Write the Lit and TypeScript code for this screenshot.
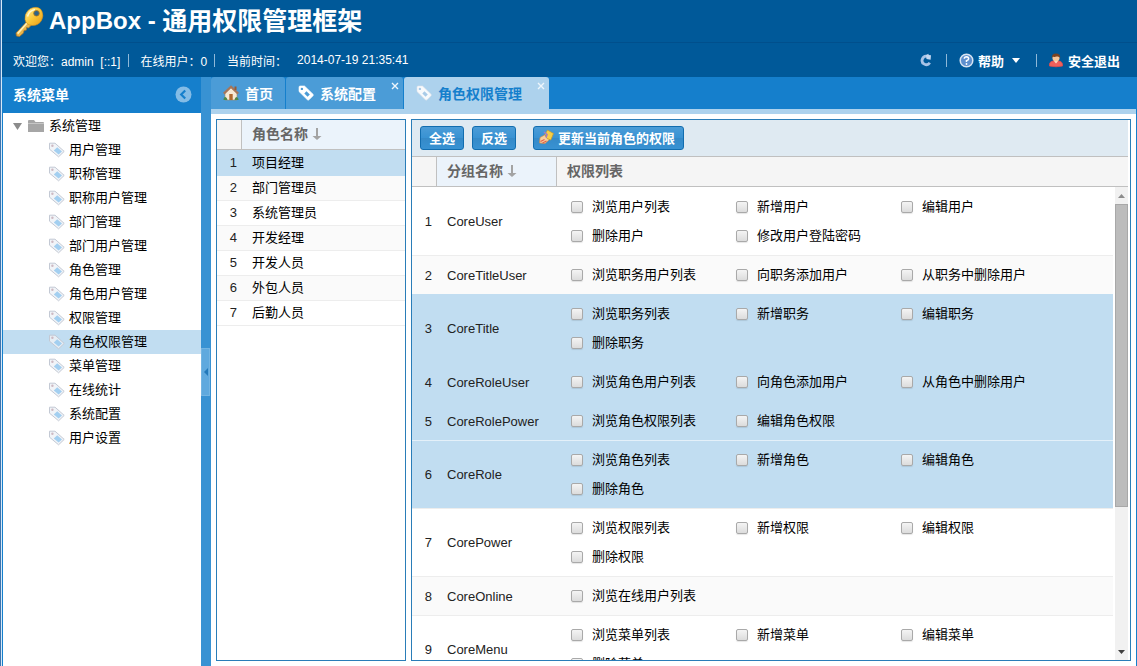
import { LitElement, html, css } from "lit";
import { customElement, state } from "lit/decorators.js";
import { classMap } from "lit/directives/class-map.js";

const MENU = [
  "用户管理", "职称管理", "职称用户管理", "部门管理", "部门用户管理", "角色管理", "角色用户管理",
  "权限管理", "角色权限管理", "菜单管理", "在线统计", "系统配置", "用户设置",
];

const ROLES = ["项目经理", "部门管理员", "系统管理员", "开发经理", "开发人员", "外包人员", "后勤人员"];

interface Group {
  name: string;
  powers: string[];
  selected?: boolean;
  divided?: boolean;
}

const GROUPS: Group[] = [
  { name: "CoreUser", powers: ["浏览用户列表", "新增用户", "编辑用户", "删除用户", "修改用户登陆密码"] },
  { name: "CoreTitleUser", powers: ["浏览职务用户列表", "向职务添加用户", "从职务中删除用户"] },
  { name: "CoreTitle", powers: ["浏览职务列表", "新增职务", "编辑职务", "删除职务"], selected: true },
  { name: "CoreRoleUser", powers: ["浏览角色用户列表", "向角色添加用户", "从角色中删除用户"], selected: true },
  { name: "CoreRolePower", powers: ["浏览角色权限列表", "编辑角色权限"], selected: true },
  { name: "CoreRole", powers: ["浏览角色列表", "新增角色", "编辑角色", "删除角色"], selected: true, divided: true },
  { name: "CorePower", powers: ["浏览权限列表", "新增权限", "编辑权限", "删除权限"] },
  { name: "CoreOnline", powers: ["浏览在线用户列表"] },
  { name: "CoreMenu", powers: ["浏览菜单列表", "新增菜单", "编辑菜单", "删除菜单"] },
];

const tagIcon = (edge: string, fill: string, core: string) => html`
  <svg width="16" height="16" viewBox="0 0 16 16" aria-hidden="true">
    <path d="M1 2.2 Q1 1 2.2 1 L6.5 1 L15 9.2 Q15.8 10 15 10.8 L11 14.8 Q10.2 15.5 9.4 14.8 L1 6.5 Z"
      fill=${fill} stroke=${edge} stroke-width="0.6" />
    <path d="M8.5 6.2 L11.8 9.4 L9.6 11.7 L6.3 8.4 Z" fill=${core} />
    <circle cx="3.9" cy="3.9" r="1.2" fill=${core} />
  </svg>`;

const sortArrow = html`
  <svg width="10" height="12" viewBox="0 0 10 12" aria-hidden="true">
    <path d="M4 0 H6 V8 H9.5 L5 12 L0.5 8 H4 Z" fill="#a3a3a3" />
  </svg>`;

const base = css`
  * { box-sizing: border-box; }
  button, input { font: inherit; margin: 0; }
  button { border: 0; padding: 0; background: none; color: inherit; cursor: pointer; }
  a { color: inherit; text-decoration: none; }
  svg { display: block; flex: none; }
`;

@customElement("app-header")
class AppHeader extends LitElement {
  static styles = [base, css`
    :host { display: block; background: #005999; color: #fff; }
    .title {
      display: flex; align-items: center; height: 42px; padding: 0 4px 0 10px;
      margin: 0; font-size: 24px; font-weight: bold; line-height: 40px; white-space: pre;
    }
    .title svg { margin-right: 5px; }
    .cn { font-size: 25px; }
    .title .collapse { margin-left: auto; align-self: flex-start; padding-top: 5px; }
    .title .collapse svg { margin: 0; }
    .bar {
      display: flex; align-items: center; height: 35px; padding: 0 17px 0 11px;
      border-top: 1px solid #004f8c; font-size: 12px;
    }
    .sep { width: 1px; height: 13px; background: #8fb8d8; }
    .user { padding-right: 8px; white-space: pre; }
    .item { padding: 0 7px 0 11px; }
    .now { padding-left: 12px; }
    .time { padding-left: 10px; }
    .actions { display: flex; align-items: center; margin-left: auto; font-size: 13px; font-weight: bold; }
    .action { display: flex; align-items: center; gap: 4px; }
    .refresh { padding-right: 13px; }
    .help { padding: 0 16px 0 12px; }
    .help .caret { margin-left: 4px; }
    .exit { padding-left: 11px; }
  `];

  render() {
    return html`
      <h1 class="title">
        <svg width="32" height="32" viewBox="0 0 32 32" aria-hidden="true">
          <defs>
            <linearGradient id="gold" x1="0" y1="0" x2="1" y2="1">
              <stop offset="0" stop-color="#fff0a0" /><stop offset="0.5" stop-color="#fbc93a" />
              <stop offset="1" stop-color="#e99a14" />
            </linearGradient>
          </defs>
          <path d="M15.5 16 L19.5 20 L16.5 23 L14.5 22.5 L14.5 25 L12 25.5 L11.5 28 L7.5 31.5 L4.5 31 L4 28 Z"
            fill="#e8b54a" stroke="#a8762c" stroke-width="0.8" />
          <path d="M15 18 L5.6 28.6" stroke="#fff1b8" stroke-width="1.6" />
          <path d="M21.5 2.5 Q28 1.5 30 6.5 Q32 11 29.5 15.5 Q26.5 20.5 20.5 20.5 Q14 20 13 14.5 Q12.5 9 16 5.5 Q18.5 3 21.5 2.5 Z"
            fill="url(#gold)" stroke="#d08c18" stroke-width="0.6" />
          <path d="M15.5 11.5 Q17 5.5 23 4.5" stroke="#fff8cf" stroke-width="1.6" fill="none" />
          <circle cx="24.5" cy="8.3" r="2.8" fill="#2e6489" stroke="#b87b16" stroke-width="0.8" />
        </svg><span>AppBox - </span><span class="cn">通用权限管理框架</span>
        <button class="collapse" aria-label="收起">
          <svg width="9" height="6" viewBox="0 0 9 6"><path d="M4.5 0 L8.5 5.5 H0.5 Z" fill="#b4b4b4" /></svg>
        </button>
      </h1>
      <div class="bar">
        <span class="user">欢迎您：admin  [::1]</span><i class="sep"></i>
        <span class="item">在线用户：0</span><i class="sep"></i>
        <span class="now">当前时间：</span><span class="time">2014-07-19 21:35:41</span>
        <div class="actions">
          <button class="action refresh" aria-label="刷新">
            <svg width="14" height="14" viewBox="0 0 14 14">
              <path d="M10.8 9.8 A4.2 4.2 0 1 1 8.5 3.4" fill="none" stroke="#a9c3e6" stroke-width="2.8" />
              <path d="M7 2 L9.5 0.8 L9.6 2 L12 2.2 L11.6 6.8 L7.5 6 Z" fill="#c3d6f0" />
            </svg>
          </button>
          <i class="sep"></i>
          <button class="action help">
            <svg width="15" height="15" viewBox="0 0 15 15">
              <circle cx="7.5" cy="7.5" r="6.3" fill="#5d8fce" stroke="#d8e4f2" stroke-width="1.5" />
              <path d="M5.3 5.8 Q5.4 3.8 7.5 3.8 Q9.7 3.9 9.6 5.8 Q9.4 7 7.5 7.6 V9" fill="none" stroke="#fff" stroke-width="1.5" />
              <circle cx="7.5" cy="11" r="0.9" fill="#fff" />
            </svg>
            帮助
            <svg class="caret" width="8" height="5" viewBox="0 0 8 5"><path d="M0 0 H8 L4 5 Z" fill="#fff" /></svg>
          </button>
          <i class="sep"></i>
          <a class="action exit" href="#exit">
            <svg width="16" height="16" viewBox="0 0 16 16">
              <path d="M1.5 14 Q0.8 9.8 5 9 L11 9 Q15 9.8 14.5 14 Q8 15.5 1.5 14 Z" fill="#f0605c" stroke="#e04c4c" stroke-width="0.8" />
              <path d="M5.8 8.8 L8 11.5 L10.2 8.8 Z" fill="#fde3d3" />
              <circle cx="8" cy="5.8" r="3.6" fill="#f8c79a" />
              <path d="M3.8 6 Q3.4 1.6 8 1.4 Q12.6 1.6 12.2 6 Q10.8 3.8 8.5 4.6 Q6 5.4 5 4.4 Z" fill="#7a4322" />
            </svg>
            安全退出
          </a>
        </div>
      </div>`;
  }
}

@customElement("app-sidebar")
class AppSidebar extends LitElement {
  @state() current = "角色权限管理";

  static styles = [base, css`
    :host { display: flex; flex-direction: column; background: #fff; border-left: 1px solid #157fcc; }
    .head {
      display: flex; align-items: center; justify-content: space-between; height: 36px;
      padding: 0 9px 2px 10px; background: #157fcc; color: #fff; font-size: 14px; font-weight: bold;
    }
    .head h2 { margin: 0; font-size: inherit; }
    .tree, .tree ul { list-style: none; margin: 0; padding: 0; font-size: 13px; }
    .tree { padding-top: 1px; }
    .node { display: flex; align-items: center; height: 24px; width: 100%; line-height: 24px; }
    .folder { padding-left: 10px; gap: 5px; }
    .folder .mark { margin-right: 1px; }
    .leaf { padding-left: 45px; gap: 2px; color: #000; }
    .on { background: #c1ddf1; }
  `];

  render() {
    return html`
      <div class="head">
        <h2>系统菜单</h2>
        <button aria-label="折叠">
          <svg width="17" height="17" viewBox="0 0 17 17">
            <circle cx="8.5" cy="8.5" r="8" fill="#84bce6" />
            <path d="M10.2 4.5 L6.2 8.5 L10.2 12.5" fill="none" stroke="#157fcc" stroke-width="2.2" />
          </svg>
        </button>
      </div>
      <ul class="tree">
        <li>
          <div class="node folder">
            <svg class="mark" width="9" height="7" viewBox="0 0 9 7"><path d="M0 0 H9 L4.5 7 Z" fill="#8c8c8c" /></svg>
            <svg width="16" height="12" viewBox="0 0 16 12">
              <path d="M0 1 Q0 0 1 0 H6 L7.5 2 H15 Q16 2 16 3 V12 H0 Z" fill="#a6a6a6" />
              <path d="M0 3.5 H16" stroke="#c6c6c6" />
            </svg>
            <span>系统管理</span>
          </div>
          <ul>
            ${MENU.map((m) => html`
              <li>
                <a class=${classMap({ node: true, leaf: true, on: m === this.current })} href="#menu"
                  @click=${() => (this.current = m)}>
                  <svg width="19" height="16" viewBox="0 0 19 16" aria-hidden="true">
                    <path d="M1.5 1.2 H7 L16.2 9.4 L10.6 14.8 L1.5 7.2 Z" fill=${m === this.current ? "#e6eef5" : "#f1f4f8"} stroke="#c3c9d4" />
                    <path d="M9.2 5.2 L14 9.4 L10.6 12.5 L5.8 8.4 Z" fill="#a3cff0" />
                    <circle cx="4.4" cy="3.8" r="1.2" fill="#cdb9c2" />
                  </svg>
                  <span>${m}</span>
                </a>
              </li>`)}
          </ul>
        </li>
      </ul>`;
  }
}

@customElement("app-tabs")
class AppTabs extends LitElement {
  static styles = [base, css`
    :host { display: block; background: #157fcc; }
    .tabs { display: flex; gap: 1px; height: 32px; }
    .strip { height: 5px; margin-right: 1px; background: #add2ed; }
    .tab {
      position: relative; display: flex; align-items: center;
      padding: 0 12px; background: #4b9cd7; color: #fff;
      font-size: 14px; font-weight: bold; border-radius: 3px 3px 0 0;
    }
    .label { display: flex; align-items: center; gap: 6px; }
    .closable { padding-right: 27px; }
    .on { background: #add2ed; color: #157fcc; }
    .close { position: absolute; top: 5px; right: 4px; }
  `];

  private close() {
    return html`
      <button class="close" aria-label="关闭">
        <svg width="8" height="8" viewBox="0 0 8 8"><path d="M1 1 L7 7 M7 1 L1 7" stroke="#eef6fc" stroke-width="1.4" /></svg>
      </button>`;
  }

  render() {
    return html`
      <div class="tabs">
        <div class="tab">
          <button class="label">
            <svg width="16" height="16" viewBox="0 0 16 16">
              <path d="M2 8 L8 2.5 L14 8 V15 H2 Z" fill="#f6ead6" stroke="#a58a66" stroke-width="0.6" />
              <path d="M0.8 8.6 L8 1.8 L15.2 8.6" fill="none" stroke="#a5765a" stroke-width="2.2" />
              <rect x="11.5" y="1.5" width="2" height="3.5" fill="#9a5a34" />
              <rect x="6.3" y="9" width="3.4" height="6" fill="#b06a30" />
              <path d="M0.5 15 Q0.5 12 2.5 12 Q4 12.5 4.5 15 Z M11.5 15 Q12 12 13.6 12 Q15.6 12.4 15.6 15 Z" fill="#4e8a4c" />
            </svg>首页
          </button>
        </div>
        <div class="tab closable">
          <button class="label">${tagIcon("#ffffff", "#ffffff", "#4b9cd7")}系统配置</button>${this.close()}
        </div>
        <div class="tab closable on">
          <button class="label">${tagIcon("#dfe3ea", "#f8fafc", "#a9cbe8")}角色权限管理</button>${this.close()}
        </div>
      </div>
      <div class="strip"></div>`;
  }
}

const gridStyles = css`
  table { border-collapse: separate; border-spacing: 0; table-layout: fixed; width: 100%; font-size: 13px; }
  th {
    height: 30px; padding: 0 10px 2px; text-align: left; background: #f5f5f5; color: #666;
    font-size: 14px; font-weight: bold; line-height: 20px; border-bottom: 1px solid #c0c0c0;
  }
  th + th { border-left: 1px solid #c0c0c0; }
  .sorted { background: #ebf3fb; }
  .sort { display: flex; align-items: center; gap: 4px; }
  .num { width: 24px; }
  td { padding: 0 10px; }
  td.num { padding: 0 4px 0 0; text-align: right; color: #222; }
`;

@customElement("role-grid")
class RoleGrid extends LitElement {
  @state() current = 0;

  static styles = [base, gridStyles, css`
    :host { display: block; background: #fff; border: 1px solid #2a7db8; overflow: hidden; }
    td { height: 25px; border-bottom: 1px solid #ededed; line-height: 20px; }
    td + td { padding-left: 11px; }
    tbody tr:first-child td { height: 26px; padding-top: 1px; }
    tr:nth-child(even) td { background: #fafafa; }
    tr.on td { background: #c1ddf1; border-color: #c1ddf1; }
  `];

  render() {
    return html`
      <table>
        <colgroup><col class="num" /><col /></colgroup>
        <thead><tr><th></th><th class="sorted"><span class="sort">角色名称${sortArrow}</span></th></tr></thead>
        <tbody>
          ${ROLES.map((r, i) => html`
            <tr class=${classMap({ on: i === this.current })} @click=${() => (this.current = i)}>
              <td class="num">${i + 1}</td><td>${r}</td>
            </tr>`)}
        </tbody>
      </table>`;
  }
}

@customElement("power-grid")
class PowerGrid extends LitElement {
  static styles = [base, gridStyles, css`
    :host {
      display: flex; flex-direction: column; background: #fff; padding-right: 2px;
      border: 1px solid #2a7db8; overflow: hidden;
    }
    .toolbar {
      display: flex; flex: none; align-items: center; gap: 8px; height: 37px; padding: 0 8px;
      background: #dfeaf2; border-bottom: 1px solid #c0c0c0;
    }
    .btn {
      display: flex; align-items: center; gap: 3px; height: 24px; padding: 0 8px 2px;
      background: linear-gradient(#4b9cd7, #3892d3 50%, #358ac8 51%, #3892d3);
      border: 1px solid #126daf; border-radius: 3px; color: #fff; font-size: 13px; font-weight: bold;
    }
    .update { margin-left: 9px; padding-left: 4px; }
    .head { flex: none; }
    .head .name, .body .name { width: 120px; }
    .view { display: flex; flex: 1; min-height: 0; overflow: hidden; }
    .body { flex: 1; min-width: 0; overflow: hidden; }
    .body td { border-top: 1px solid #ededed; }
    .body tr:first-child td { border-color: #fff; }
    .body tr:nth-child(even) td { background: #fafafa; }
    .body tr.on td { background: #c1ddf1; border-color: #c1ddf1; }
    .body tr.divided td { border-top-color: #e4f0f9; }
    .body td.title { padding-left: 11px; color: #222; }
    .body td.list { padding: 4px 0 5px 15px; }
    .powers { display: grid; grid-template-columns: repeat(auto-fill, 165px); }
    .power { display: flex; align-items: center; gap: 9px; height: 29px; white-space: nowrap; }
    .power span { padding-bottom: 2px; }
    .box {
      appearance: none; width: 12px; height: 12px; border: 1px solid #a9a9a9; border-radius: 2px;
      background: linear-gradient(#f4f4f4, #dcdcdc); box-shadow: 0 1px 1px rgba(0, 0, 0, 0.1);
    }
    .box:checked { background: #3892d3; }
    .scroll {
      display: flex; flex: none; flex-direction: column; align-items: center;
      width: 13px; margin-left: 2px; background: #f1f1f1;
    }
    .arrow { display: flex; align-items: center; justify-content: center; width: 13px; height: 17px; }
    .rail { flex: 1; width: 100%; }
    .thumb { width: 13px; height: 69%; background: #bcbcbc; border: 1px solid #a8a8a8; }
  `];

  render() {
    return html`
      <div class="toolbar">
        <button class="btn">全选</button>
        <button class="btn">反选</button>
        <button class="btn update">
          <svg width="17" height="16" viewBox="0 0 17 16" aria-hidden="true">
            <path d="M2 8.5 L6.5 6 L11.5 10.5 L7 14.5 L1.5 14 Z" fill="#f8cf9a" stroke="#c98a4a" stroke-width="0.7" />
            <path d="M7 5.5 L9.5 1 L15.5 4.5 L12.8 11 L9 9.5 Z" fill="#f6cf45" stroke="#c3962e" stroke-width="0.7" />
            <path d="M6 3 L9 5.5 L8 8.5" stroke="#a47cc4" stroke-width="1.6" fill="none" />
            <path d="M2.5 12.5 L6.5 10.5 M4.5 14 L8.5 12" stroke="#e2604c" stroke-width="1.2" />
          </svg>
          更新当前角色的权限
        </button>
      </div>
      <table class="head">
        <colgroup><col class="num" /><col class="name" /><col /></colgroup>
        <thead>
          <tr><th></th><th class="sorted"><span class="sort">分组名称${sortArrow}</span></th><th>权限列表</th></tr>
        </thead>
      </table>
      <div class="view">
        <div class="body">
          <table>
            <colgroup><col class="num" /><col class="name" /><col /></colgroup>
            <tbody>
              ${GROUPS.map((g, i) => html`
                <tr class=${classMap({ on: !!g.selected, divided: !!g.divided })}>
                  <td class="num">${i + 1}</td>
                  <td class="title">${g.name}</td>
                  <td class="list">
                    <div class="powers">
                      ${g.powers.map((p) => html`
                        <label class="power"><input class="box" type="checkbox" /><span>${p}</span></label>`)}
                    </div>
                  </td>
                </tr>`)}
            </tbody>
          </table>
        </div>
        <div class="scroll" aria-hidden="true">
          <span class="arrow"><svg width="7" height="4" viewBox="0 0 7 4"><path d="M3.5 0 L7 4 H0 Z" fill="#8c8c8c" /></svg></span>
          <div class="rail"><div class="thumb"></div></div>
          <span class="arrow"><svg width="7" height="4" viewBox="0 0 7 4"><path d="M0 0 H7 L3.5 4 Z" fill="#404040" /></svg></span>
        </div>
      </div>`;
  }
}

@customElement("app-root")
class AppRoot extends LitElement {
  static styles = [base, css`
    :host {
      display: flex; flex-direction: column; box-sizing: border-box; height: 100vh; overflow: hidden;
      background: #d6e9f8; border-left: 1px solid #3f74ae; padding-left: 1px; color: #000;
      font-family: "Liberation Sans", "Noto Sans CJK SC", sans-serif; font-size: 13px;
    }
    app-header { flex: none; }
    .work { display: flex; flex: 1; min-height: 0; background: #157fcc; }
    app-sidebar { flex: none; width: 199px; }
    .split { display: flex; flex: none; align-items: center; width: 10px; background: #3892d3; }
    .grip {
      display: flex; align-items: center; justify-content: center; width: 9px; height: 48px;
      background: #5fa9de; border: 1px solid #73b4e2;
    }
    .main { display: flex; flex: 1; flex-direction: column; min-width: 0; }
    .page { display: flex; flex: 1; gap: 5px; min-height: 0; margin-right: 1px; padding: 5px; background: #fff; }
    role-grid { flex: none; width: 190px; }
    power-grid { flex: 1; min-width: 0; }
  `];

  render() {
    return html`
      <app-header></app-header>
      <div class="work">
        <app-sidebar></app-sidebar>
        <div class="split">
          <button class="grip" aria-label="折叠菜单">
            <svg width="4" height="8" viewBox="0 0 4 8"><path d="M4 0 V8 L0 4 Z" fill="#2279ba" /></svg>
          </button>
        </div>
        <div class="main">
          <app-tabs></app-tabs>
          <div class="page">
            <role-grid></role-grid>
            <power-grid></power-grid>
          </div>
        </div>
      </div>`;
  }
}
